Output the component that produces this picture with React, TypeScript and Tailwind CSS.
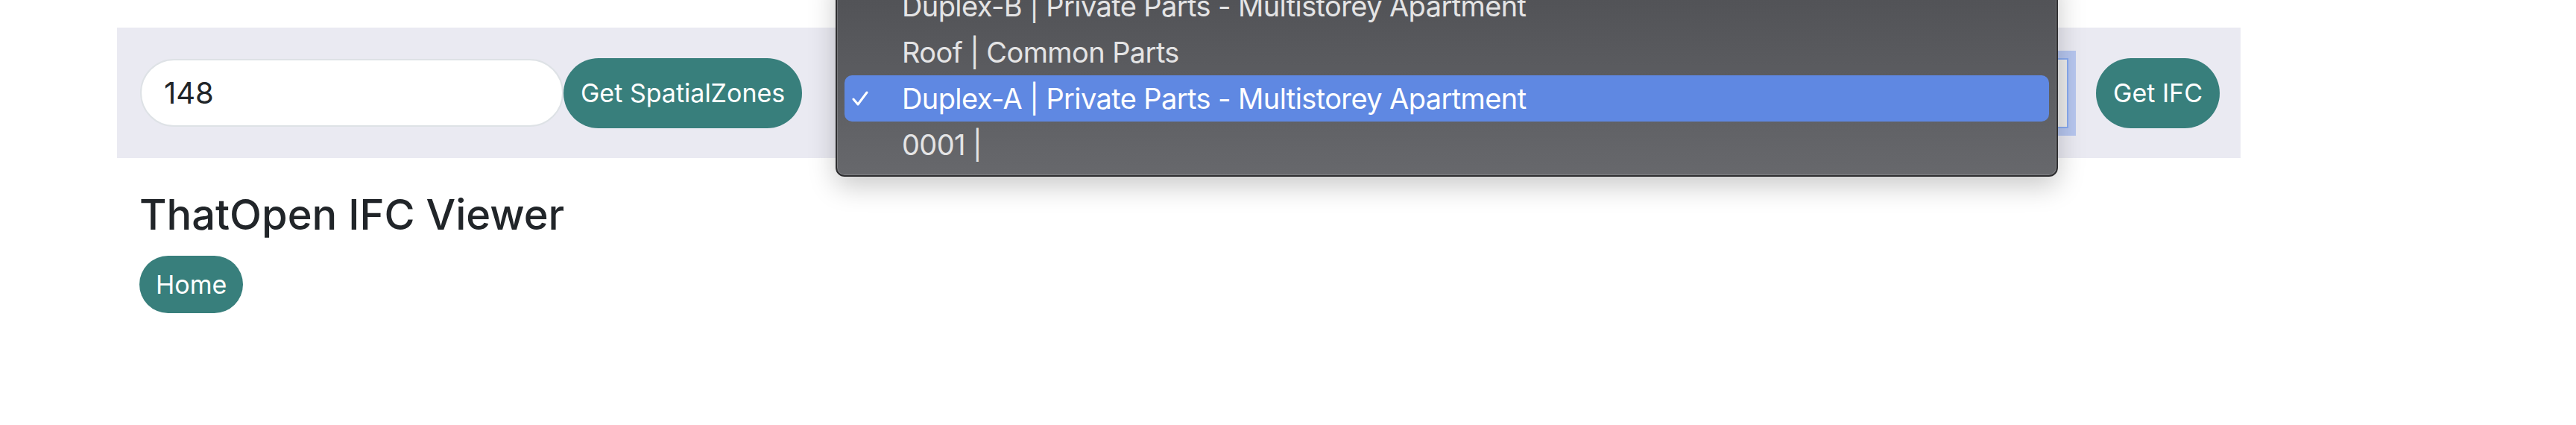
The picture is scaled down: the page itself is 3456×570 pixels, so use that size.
import React from 'react';

const options = [
  { label: 'Duplex-B | Private Parts - Multistorey Apartment', selected: false },
  { label: 'Roof | Common Parts', selected: false },
  { label: 'Duplex-A | Private Parts - Multistorey Apartment', selected: true },
  { label: '0001 |', selected: false },
];

function CheckMark() {
  return (
    <svg width="22" height="20" viewBox="0 0 22 20" fill="none">
      <path d="M2 11 L8 18 L20 2" stroke="white" strokeWidth="3" strokeLinecap="round" strokeLinejoin="round" />
    </svg>
  );
}

export default function App() {
  return (
    <div className="relative w-[3456px] h-[570px] bg-white overflow-hidden font-['Inter',sans-serif] text-[#212529]">
      {/* toolbar */}
      <div className="mt-[37px] ml-[157px] w-[2849px] h-[175px] bg-[#eaeaf2] flex items-center pl-[31px] pr-[28px]">
        <input
          readOnly
          value="148"
          className="w-[568px] h-[91px] rounded-full border-2 border-[#dee2e6] bg-white px-[30px] text-[40px] text-[#212529] outline-none"
        />
        <button className="h-[94px] px-[23px] rounded-full bg-[#387f7c] text-white text-[34px]">
          Get SpatialZones
        </button>
        <div className="flex-1 ml-[70px] mr-[37px] h-[94px] bg-[#ececec] border-2 border-[#8aabf0] shadow-[0_0_0_10px_#b6c6ef]" />
        <button className="h-[94px] px-[23px] rounded-full bg-[#387f7c] text-white text-[34px]">
          Get IFC
        </button>
      </div>

      <div className="pl-[187px]">
        <h3 className="mt-[43px] text-[56px] leading-[1.2] font-medium">ThatOpen IFC Viewer</h3>
        <button className="mt-[21px] h-[77px] px-[22px] rounded-full bg-[#387f7c] text-white text-[34px]">
          Home
        </button>
      </div>

      {/* native select menu, open */}
      <div className="absolute left-[1121px] top-[-36px] w-[1640px] pt-[11px] pb-[10px] px-[10px] rounded-b-[12px] border-2 border-[#2e2e30] bg-linear-to-b from-[#4f5054] to-[#67686c] shadow-[0_12px_36px_rgba(0,0,0,0.22),inset_0_0_0_1px_rgba(255,255,255,0.18)]">
        {options.map((o) => (
          <div
            key={o.label}
            className={`h-[62px] flex items-center rounded-[10px] ${o.selected ? 'bg-[#5f88e2] text-white' : 'text-[#e4e4e5]'}`}
          >
            <span className="w-[77px] pl-[10px] flex items-center">{o.selected && <CheckMark />}</span>
            <span className="text-[38px] tracking-[-0.6px]">{o.label}</span>
          </div>
        ))}
      </div>
    </div>
  );
}
